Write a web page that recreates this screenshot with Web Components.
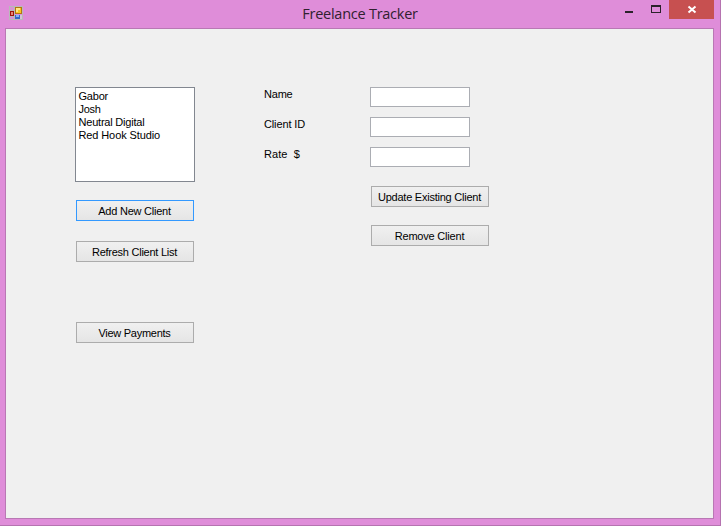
<!DOCTYPE html>
<html lang="en">
<head>
<meta charset="utf-8">
<title>Freelance Tracker</title>
<style>
html, body { margin: 0; height: 100%; overflow: hidden; }
body { font: 11px/13px "Liberation Sans", Arial, sans-serif; color: #000; }
</style>
</head>
<body>
<app-window></app-window>
<script>
const define = (name, html, setup) => {
  const template = document.createElement('template');
  template.innerHTML = html.trim();
  customElements.define(name, class extends HTMLElement {
    constructor() {
      super();
      this.attachShadow({ mode: 'open' }).append(template.content.cloneNode(true));
    }
    connectedCallback() { if (setup) setup(this); }
  });
};

// A single line of text whose tracking is adjusted to fill its "width" attribute.
define('fit-text', `<style>:host { display: inline-block; } span { display: inline-block; white-space: pre; vertical-align: top; }</style><span><slot></slot></span>`, el => {
  const target = parseFloat(el.getAttribute('width'));
  const natural = el.shadowRoot.querySelector('span').getBoundingClientRect().width;
  const spacing = (target - natural) / el.textContent.length;
  el.style.letterSpacing = spacing.toFixed(3) + 'px';
});

define('app-icon', `
<style>:host { display: block; width: 14px; height: 14px; } svg { display: block; }</style>
<svg width="14" height="14" viewBox="0 0 14 14" shape-rendering="crispEdges">
  <path d="M.5 .5h13v13H.5z M5.5 .5v13 M.5 4.5h5 M.5 10.5h5 M5.5 7.5h8" fill="none" stroke="#b9b9b9"/>
  <path d="M1 1h4v3H1z M1 11h4v2H1z" fill="#d795d4"/>
  <path d="M6 1h7v7H6z" fill="#b27612"/><path d="M7 2h5v5H7z" fill="#fac51f"/><path d="M7 2h4v2H9v2H7z" fill="#ffe783"/>
  <path d="M1 5h4v5H1z" fill="#9e160d"/><path d="M2 6h2v3H2z" fill="#e98575"/>
  <path d="M6 9h5v4H6z" fill="#3567c8"/><path d="M7 9h3v2H7z" fill="#85b5f4"/>
  <path d="M11 9h2v4h-2z" fill="#d4c4d5"/>
</svg>`);

define('window-controls', `
<style>
:host { display: flex; height: 19px; }
span { display: block; width: 27px; height: 19px; }
.close { width: 45px; background: #c75050; }
svg { display: block; }
</style>
<span><svg width="27" height="19"><path d="M10 11h8v2h-8z" fill="#2b222a"/></svg></span>
<span><svg width="27" height="19" shape-rendering="crispEdges"><path fill-rule="evenodd" d="M9 5h10v8H9z M10 7v5h8V7z" fill="#2b222a"/></svg></span>
<span class="close"><svg width="45" height="19"><path d="M19.5 6.4l7 6.2M26.5 6.4l-7 6.2" stroke="#fff" stroke-width="2" fill="none"/></svg></span>`);

define('title-bar', `
<style>
:host { display: grid; grid-template-columns: 107px 1fr 107px; height: 28px; align-items: start; }
app-icon { margin: 6px 0 0 9px; }
.title { justify-self: center; margin-top: 4px; font: 14.5px/20px "Open Sans", "Noto Sans", sans-serif; color: #30212f; }
window-controls { justify-self: end; margin-right: 6px; }
</style>
<app-icon></app-icon>
<div class="title"><slot></slot></div>
<window-controls></window-controls>`);

define('list-box', `
<style>
:host { display: block; box-sizing: border-box; width: 120px; height: 95px; border: 1px solid #828790; background: #fff; padding: 2px 3px 2px 2.5px; }
::slotted(*) { display: block !important; height: 13px; }
</style><slot></slot>`);

define('push-button', `
<style>
:host { display: block; }
button { display: flex; justify-content: center; box-sizing: border-box; width: 118px; height: 21px; border: 1px solid #acacac; padding: 0; margin: 0; background: linear-gradient(#f0f0f0, #e5e5e5); font: inherit; color: inherit; align-items: flex-start; }
:host([default]) button { border-color: #3399ff; }
div { padding: 4px 1px 0 0; white-space: nowrap; }
</style><button><div><slot></slot></div></button>`);

define('form-field', `
<style>
:host { display: grid; grid-template-columns: 106px 100px; height: 20px; }
.label { padding-top: 1px; }
input { box-sizing: border-box; width: 100px; height: 20px; border: 1px solid #abadb3; border-radius: 0; background: #fff; margin: 0; padding: 1px 3px; font: inherit; outline: 0; }
</style><div class="label"><slot></slot></div><input type="text">`);

define('app-window', `
<style>
:host { display: flex; flex-direction: column; box-sizing: border-box; width: 721px; height: 526px; background: #df8dd9; border: solid #b573b0; border-width: 0 1px 1px 0; }
main { box-sizing: border-box; flex: 1; margin: 0 6px 6px 5px; border: 1px solid #b978b4; background: #f0f0f0; display: grid; grid-template-columns: 120px 225px; column-gap: 69px; align-content: start; padding: 58px 0 0 69px; }
.clients, .details { display: flex; flex-direction: column; align-items: flex-start; }
.clients push-button { margin-left: 1px; }
.add { margin-top: 18px; }
.refresh { margin-top: 20px; }
.payments { margin-top: 60px; }
.fields { display: grid; row-gap: 10px; }
.details push-button { margin-left: 107px; }
.update { margin-top: 19px; }
.remove { margin-top: 18px; }
</style>
<title-bar><fit-text width="115.5">Freelance Tracker</fit-text></title-bar>
<main>
  <section class="clients">
    <list-box>
      <fit-text width="29.5">Gabor</fit-text>
      <fit-text width="22">Josh</fit-text>
      <fit-text width="66">Neutral Digital</fit-text>
      <fit-text width="81.5">Red Hook Studio</fit-text>
    </list-box>
    <push-button class="add" default><fit-text width="72.5">Add New Client</fit-text></push-button>
    <push-button class="refresh"><fit-text width="85">Refresh Client List</fit-text></push-button>
    <push-button class="payments"><fit-text width="72">View Payments</fit-text></push-button>
  </section>
  <section class="details">
    <div class="fields">
      <form-field><fit-text width="28.5">Name</fit-text></form-field>
      <form-field><fit-text width="41">Client ID</fit-text></form-field>
      <form-field><fit-text width="36">Rate  $</fit-text></form-field>
    </div>
    <push-button class="update"><fit-text width="103">Update Existing Client</fit-text></push-button>
    <push-button class="remove"><fit-text width="69.5">Remove Client</fit-text></push-button>
  </section>
</main>`);
</script>
</body>
</html>
